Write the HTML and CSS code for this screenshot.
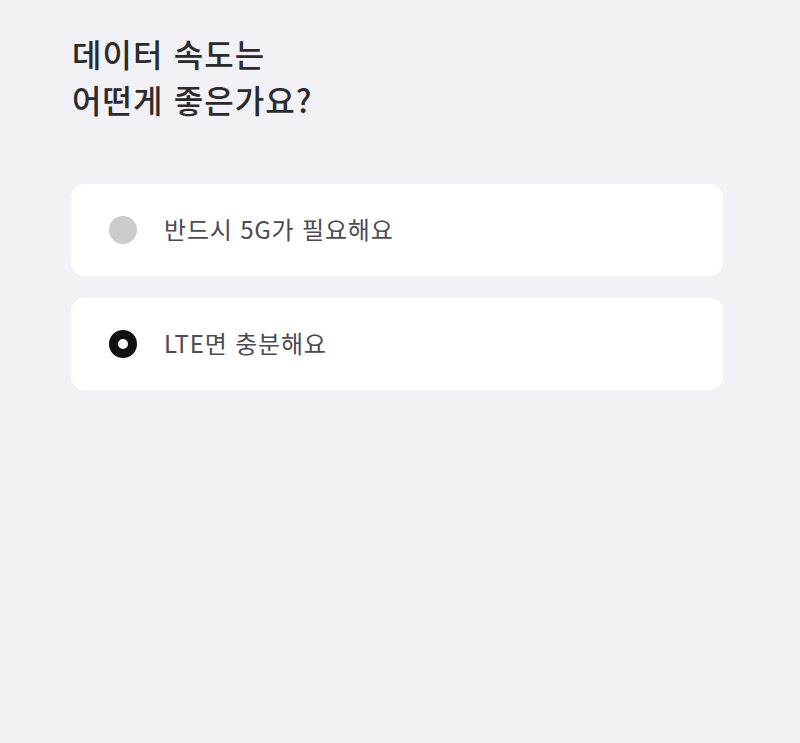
FILE: index.html
```html
<!DOCTYPE html>
<html lang="ko">
<head>
<meta charset="utf-8">
<link rel="stylesheet" href="styles.css">
</head>
<body>
<main class="page">
  <h1 class="title">데이터 속도는<br>어떤게 좋은가요?</h1>
  <div class="options">
    <label class="option">
      <span class="radio"></span>
      <span class="label">반드시 5G가 필요해요</span>
    </label>
    <label class="option">
      <span class="radio radio--checked"></span>
      <span class="label">LTE면 충분해요</span>
    </label>
  </div>
</main>
</body>
</html>
```
FILE: styles.css
```css
html, body {
  margin: 0;
  padding: 0;
  background: #f2f1f6;
  height: 100%;
}
body {
  font-family: "Noto Sans CJK KR", "Noto Sans", sans-serif;
}
.page {
  padding: 30px 77px 0 71px;
}
.title {
  margin: 0 0 0 1px;
  font-size: 32px;
  line-height: 46px;
  font-weight: 500;
  color: #2b2b2e;
  letter-spacing: 1.1px;
}
.options {
  margin-top: 62px;
  display: flex;
  flex-direction: column;
  gap: 22px;
}
.option {
  display: flex;
  align-items: center;
  height: 92px;
  background: #ffffff;
  border-radius: 14px;
  padding-left: 38px;
  box-sizing: border-box;
}
.radio {
  width: 28px;
  height: 28px;
  border-radius: 50%;
  background: #cccccc;
  flex: none;
  box-sizing: border-box;
}
.radio--checked {
  background: #fff;
  border: 9px solid #111111;
}
.label {
  margin-left: 27px;
  margin-bottom: 4px;
  font-size: 24px;
  color: #4b4a55;
  letter-spacing: 0.8px;
}
```
